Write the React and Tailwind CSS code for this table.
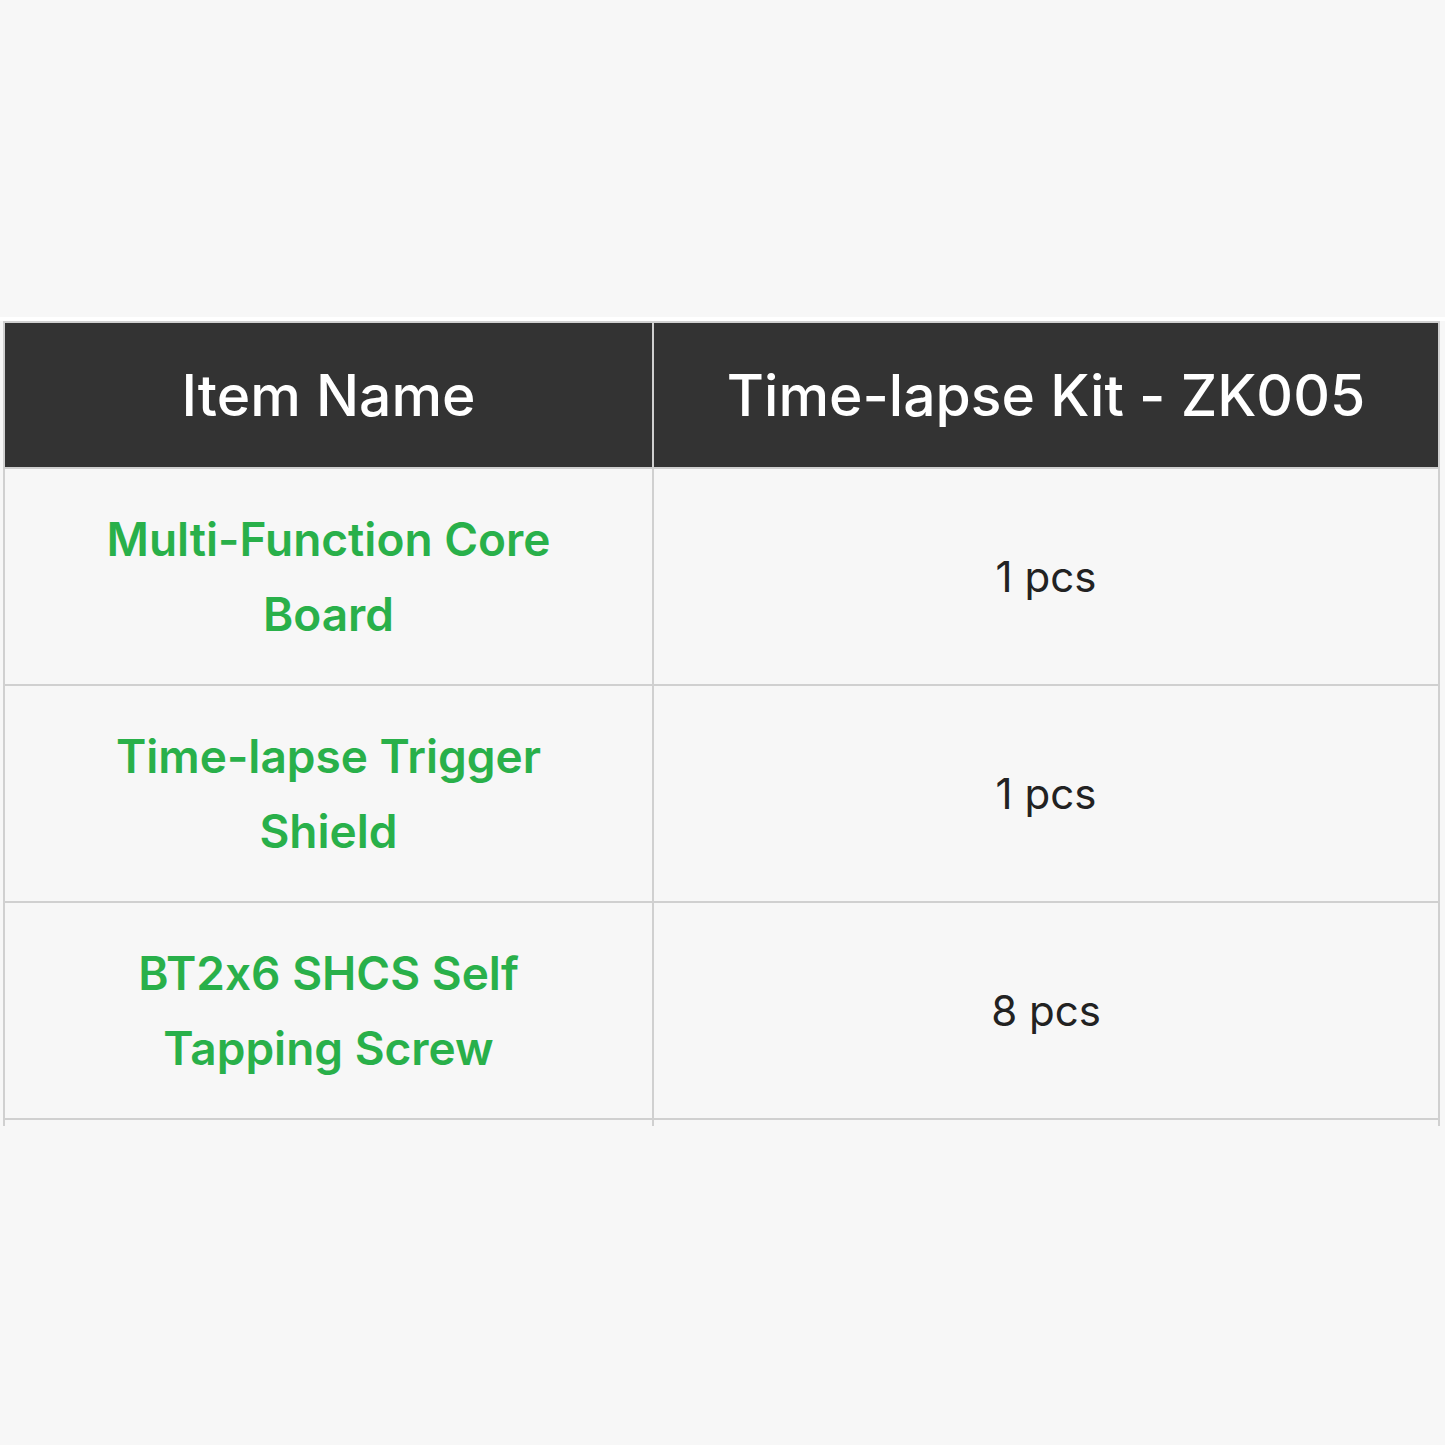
import React from "react";

const ROWS = [
  { name: "Multi-Function Core Board", qty: "1 pcs" },
  { name: "Time-lapse Trigger Shield", qty: "1 pcs" },
  { name: "BT2x6 SHCS Self Tapping Screw", qty: "8 pcs" },
];

export default function App() {
  return (
    <div
      className="min-h-screen bg-[#f7f7f7] pt-[317px] [font-feature-settings:'calt'_0]"
      style={{ fontFamily: "Inter, 'Noto Sans', sans-serif" }}
    >
      <div className="border-t-[4px] border-white pl-[3px] overflow-hidden">
        <table className="border-collapse w-[1437px] table-fixed">
          <colgroup>
            <col className="w-[649px]" />
            <col />
          </colgroup>
          <thead>
            <tr className="bg-[#333333]">
              <th className="h-[146px] border-2 border-[#d0d0d0] text-white text-[57px] font-medium leading-none text-center">
                Item Name
              </th>
              <th className="h-[146px] border-2 border-[#d0d0d0] text-white text-[57px] font-medium leading-none text-center">
                Time-lapse Kit - ZK005
              </th>
            </tr>
          </thead>
          <tbody>
            {ROWS.map((row) => (
              <tr key={row.name}>
                <td className="h-[217px] border-2 border-[#d0d0d0] px-[70px] text-center text-[46px] leading-[75px] font-semibold text-[#29b04a]">
                  {row.name}
                </td>
                <td className="h-[217px] border-2 border-[#d0d0d0] text-center text-[42px] text-[#222]">
                  {row.qty}
                </td>
              </tr>
            ))}
            <tr>
              <td className="h-[7px] p-0 border-x-2 border-[#d0d0d0]" />
              <td className="h-[7px] p-0 border-x-2 border-[#d0d0d0]" />
            </tr>
          </tbody>
        </table>
      </div>
    </div>
  );
}
